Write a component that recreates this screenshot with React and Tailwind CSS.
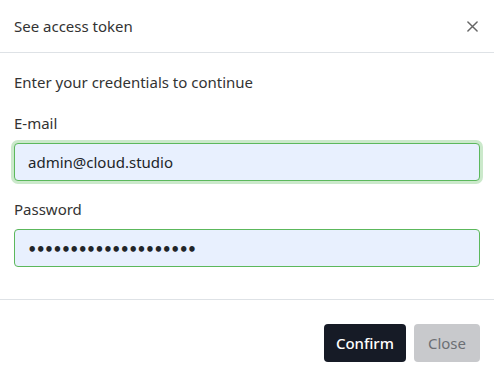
export default function App() {
  return (
    <div className="w-[494px] h-[376px] bg-white text-[#212529]" style={{ fontFamily: '"Noto Sans", Lato, sans-serif' }}>
      <div className="h-[53px] flex items-center justify-between pl-[14px] pr-[14px] border-b border-[#dee2e6]">
        <span className="text-[15px] text-[#333]">See access token</span>
        <button className="text-[#666] w-4 h-4 flex items-center justify-center">
          <svg width="11" height="11" viewBox="0 0 12 12" stroke="currentColor" strokeWidth="1.6" strokeLinecap="round">
            <path d="M1 1L11 11M11 1L1 11" />
          </svg>
        </button>
      </div>
      <div className="px-[14px] pt-[19px] pb-[32px] border-b border-[#dee2e6]">
        <p className="text-[15px] text-[#333] leading-5">Enter your credentials to continue</p>
        <label className="block mt-[21px] text-[15px] text-[#333] leading-5">E-mail</label>
        <input
          readOnly
          value="admin@cloud.studio"
          className="mt-[10px] w-full h-[38px] px-[13px] text-[15px] text-[#212529] bg-[#e8f0fe] border border-[#5cb85c] rounded-[4px] ring-[3px] ring-[#cbe9cb] outline-none"
        />
        <label className="block mt-[18px] text-[15px] text-[#333] leading-5">Password</label>
        <input
          readOnly
          type="password"
          value="aaaaaaaaaaaaaaaaaaaa"
          className="mt-[10px] w-full h-[38px] px-[13px] text-[14.5px] font-['Lato'] text-[#212529] bg-[#e8f0fe] border border-[#5cb85c] rounded-[4px] outline-none"
        />
      </div>
      <div className="flex justify-end gap-2 px-[14px] pt-[24px]">
        <button className="h-[38px] px-[12px] rounded-[4px] bg-[#161b26] text-white text-[15px] font-medium">Confirm</button>
        <button className="h-[38px] px-[14px] rounded-[4px] bg-[#c8c9cc] text-[#6c6f74] text-[15px]">Close</button>
      </div>
    </div>
  );
}
